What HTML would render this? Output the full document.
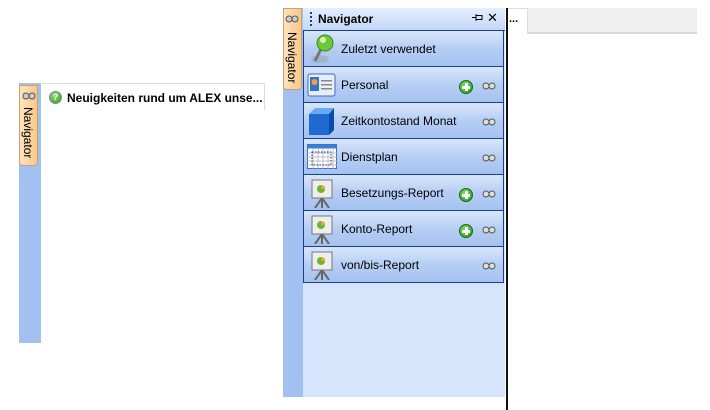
<!DOCTYPE html>
<html><head><meta charset="utf-8"><style>
*{margin:0;padding:0;box-sizing:border-box}
body{width:710px;height:410px;background:#fff;position:relative;overflow:hidden;font-family:"Liberation Sans",sans-serif;font-size:12px;color:#000}
.abs{position:absolute}
.strip{background:#a2c0f0}
.tab{background:linear-gradient(90deg,#fde3bd,#f8c88a);border:1px solid #c9a070;border-radius:0 0 4px 4px}
.vt{position:absolute;writing-mode:vertical-rl;font-size:12px;color:#000;font-family:"Liberation Sans",sans-serif}
.item{position:absolute;left:303px;width:201px;height:36px;border:1px solid #1c3c8c;border-top:none;background:linear-gradient(#d8e6fb,#b6cef4 50%,#a4c2f0);}
.item span{position:absolute;left:37px;top:11px;font-size:12px}
.bino{position:absolute;left:178px;top:14px}
.plus{position:absolute;left:155px;top:13px;width:14px;height:14px;border-radius:50%;background:radial-gradient(circle at 40% 35%,#7fd86a,#1f9a1a);border:1px solid #186c14}
.plus:before{content:"";position:absolute;left:5px;top:2px;width:3px;height:8px;background:#fff}
.plus:after{content:"";position:absolute;left:2px;top:5px;width:8px;height:3px;background:#fff}
.rep{position:absolute;left:6px;top:3px;width:24px;height:30px}
</style></head><body>
<div class="abs strip" style="left:19px;top:83px;width:22px;height:260px"></div>
<div class="abs tab" style="left:19px;top:85px;width:19px;height:81px"></div>
<svg class="abs" style="left:22px;top:90px" width="14" height="10"><circle cx="4" cy="6" r="3" fill="#ccc" stroke="#555"/><circle cx="10" cy="6" r="3" fill="#ccc" stroke="#555"/></svg>
<div class="vt" style="left:21px;top:107px">Navigator</div>
<div class="abs" style="left:42px;top:83px;width:223px;height:1px;background:#ddd"></div>
<div class="abs" style="left:264px;top:83px;width:1px;height:27px;background:#ddd"></div>
<div class="abs" style="left:49px;top:91px;width:13px;height:13px;border-radius:50%;background:radial-gradient(circle at 40% 35%,#8ee070,#2a9a20);border:1px solid #888;color:#fff;font-size:9px;font-weight:bold;text-align:center;line-height:11px">?</div>
<div class="abs" style="left:67px;top:91px;font-weight:bold;font-size:12px">Neuigkeiten rund um ALEX unse...</div>

<div class="abs strip" style="left:283px;top:8px;width:20px;height:389px"></div>
<div class="abs tab" style="left:283px;top:8px;width:19px;height:82px"></div>
<svg class="abs" style="left:285px;top:13px" width="14" height="10"><circle cx="4" cy="6" r="3" fill="#ccc" stroke="#555"/><circle cx="10" cy="6" r="3" fill="#ccc" stroke="#555"/></svg>
<div class="vt" style="left:285px;top:32px">Navigator</div>

<div class="abs" style="left:303px;top:8px;width:202px;height:389px;background:#d6e5fb"></div>
<div class="abs" style="left:303px;top:8px;width:202px;height:23px;background:linear-gradient(#e4eefd,#c4d8f7);border-bottom:1px solid #1c3c8c"></div>
<div class="abs" style="left:310px;top:12px;width:2px;height:14px;background:repeating-linear-gradient(#1c3c8c 0 2px,transparent 2px 4px)"></div>
<div class="abs" style="left:318px;top:12px;font-weight:bold">Navigator</div>
<svg class="abs" style="left:471px;top:13px" width="12" height="9"><path d="M1 4.5H5M5 1V8M5 2.5H11V6.5H5" stroke="#000" fill="none"/></svg>
<div class="abs" style="left:487px;top:10px;font-size:13px">✕</div>

<div class="item" style="top:31px"><svg class="abs" style="left:6px;top:2px" width="26" height="32"><ellipse cx="10" cy="26" rx="9" ry="4" fill="#999" opacity=".4"/><line x1="12" y1="14" x2="5" y2="28" stroke="#777" stroke-width="3"/><circle cx="15" cy="10" r="8" fill="#6cc93a" stroke="#3a8a1a"/><circle cx="13" cy="7" r="3" fill="#d8f5b0"/></svg><span>Zuletzt verwendet</span></div>
<div class="item" style="top:67px"><svg class="abs" style="left:3px;top:5px" width="30" height="26"><rect x="1" y="2" width="27" height="22" rx="2" fill="#e8eef8" stroke="#3a70c0"/><rect x="3" y="5" width="9" height="14" fill="#3a70c0"/><circle cx="7.5" cy="10" r="3" fill="#f0a050"/><rect x="14" y="8" width="11" height="1.5" fill="#888"/><rect x="14" y="12" width="11" height="1.5" fill="#888"/><rect x="14" y="16" width="11" height="1.5" fill="#888"/></svg><span>Personal</span><div class="plus"></div><svg class="bino" width="14" height="9"><circle cx="4" cy="5" r="3" fill="#ddd" stroke="#555"/><circle cx="10" cy="5" r="3" fill="#ddd" stroke="#555"/></svg></div>
<div class="item" style="top:103px"><svg class="abs" style="left:3px;top:3px" width="28" height="30"><polygon points="2,8 8,2 27,2 22,8" fill="#6aa8f0"/><polygon points="22,8 27,2 27,24 22,29" fill="#0c4aa8"/><rect x="2" y="8" width="20" height="21" fill="#1e6ad0"/></svg><span>Zeitkontostand Monat</span><svg class="bino" width="14" height="9"><circle cx="4" cy="5" r="3" fill="#ddd" stroke="#555"/><circle cx="10" cy="5" r="3" fill="#ddd" stroke="#555"/></svg></div>
<div class="item" style="top:139px"><svg class="abs" style="left:3px;top:5px" width="30" height="26"><rect x="0.5" y="0.5" width="29" height="24" fill="#fff" stroke="#3a70c0"/><rect x="0.5" y="0.5" width="29" height="4" fill="#3a80d0"/><path d="M0 9H30M0 13H30M0 17H30M0 21H30M6 4V25M11 4V25M16 4V25M21 4V25M26 4V25" stroke="#aab" stroke-width=".7"/><rect x="5" y="8" width="19" height="13" fill="none" stroke="#1c3c8c" stroke-dasharray="1.5 1.5"/></svg><span>Dienstplan</span><svg class="bino" width="14" height="9"><circle cx="4" cy="5" r="3" fill="#ddd" stroke="#555"/><circle cx="10" cy="5" r="3" fill="#ddd" stroke="#555"/></svg></div>
<div class="item" style="top:175px"><svg class="rep" width="24" height="30"><path d="M12 20L5 30M12 20L19 30M12 18V30" stroke="#666" stroke-width="2"/><rect x="2" y="2" width="20" height="18" fill="#eee" stroke="#777"/><circle cx="11" cy="11" r="4" fill="#6ab830"/><path d="M11 11V7A4 4 0 0 1 15 11Z" fill="#f0a030"/></svg><span>Besetzungs-Report</span><div class="plus"></div><svg class="bino" width="14" height="9"><circle cx="4" cy="5" r="3" fill="#ddd" stroke="#555"/><circle cx="10" cy="5" r="3" fill="#ddd" stroke="#555"/></svg></div>
<div class="item" style="top:211px"><svg class="rep" width="24" height="30"><path d="M12 20L5 30M12 20L19 30M12 18V30" stroke="#666" stroke-width="2"/><rect x="2" y="2" width="20" height="18" fill="#eee" stroke="#777"/><circle cx="11" cy="11" r="4" fill="#6ab830"/><path d="M11 11V7A4 4 0 0 1 15 11Z" fill="#f0a030"/></svg><span>Konto-Report</span><div class="plus"></div><svg class="bino" width="14" height="9"><circle cx="4" cy="5" r="3" fill="#ddd" stroke="#555"/><circle cx="10" cy="5" r="3" fill="#ddd" stroke="#555"/></svg></div>
<div class="item" style="top:247px"><svg class="rep" width="24" height="30"><path d="M12 20L5 30M12 20L19 30M12 18V30" stroke="#666" stroke-width="2"/><rect x="2" y="2" width="20" height="18" fill="#eee" stroke="#777"/><circle cx="11" cy="11" r="4" fill="#6ab830"/><path d="M11 11V7A4 4 0 0 1 15 11Z" fill="#f0a030"/></svg><span>von/bis-Report</span><svg class="bino" width="14" height="9"><circle cx="4" cy="5" r="3" fill="#ddd" stroke="#555"/><circle cx="10" cy="5" r="3" fill="#ddd" stroke="#555"/></svg></div>

<div class="abs" style="left:506px;top:8px;width:2px;height:402px;background:#111"></div>
<div class="abs" style="left:508px;top:8px;width:20px;height:26px;border-top:1px solid #ddd"></div>
<div class="abs" style="left:527px;top:8px;width:170px;height:26px;background:#efefef;border-bottom:2px solid #d8d8d8;border-left:1px solid #ddd"></div>
<div class="abs" style="left:509px;top:13px;font-weight:bold;font-size:11px">...</div>
</body></html>
